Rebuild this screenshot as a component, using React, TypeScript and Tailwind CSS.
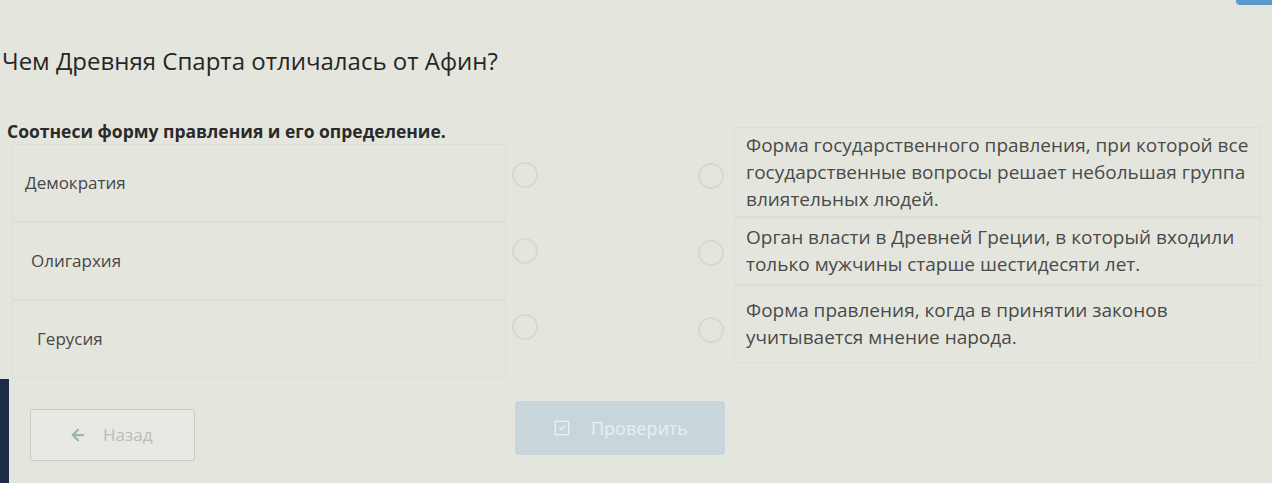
import { ArrowLeft, SquareCheck } from "lucide-react";

const terms = ["Демократия", "Олигархия", "Герусия"];

const definitions = [
    { h: 90, lines: ["Форма государственного правления, при которой все", "государственные вопросы решает небольшая группа", "влиятельных людей."] },
    { h: 68, lines: ["Орган власти в Древней Греции, в который входили", "только мужчины старше шестидесяти лет."] },
    { h: 78, lines: ["Форма правления, когда в принятии законов", "учитывается мнение народа."] },
];

function Dot() {
    return <div className="h-[26px] w-[26px] rounded-full border-2 border-[#d6d9cf]" />;
}

export default function App() {
    return (
        <div
            className="relative h-[483px] w-[1272px] overflow-hidden bg-[#e4e6de]"
            style={{ fontFamily: '"Open Sans", "Noto Sans", sans-serif' }}
        >
            {/* monitor edge + header button remnant */}
            <div className="absolute bottom-0 left-0 h-[104px] w-[9px] bg-[#1d2b45]" />
            <div className="absolute right-0 top-0 h-[5px] w-[36px] rounded-bl-sm bg-[#5b9bc9]" />

            <div className="pt-[43px]">
                <h1 className="pl-[2px] text-[24px] leading-[36px] text-[#262626]">
                    Чем Древняя Спарта отличалась от Афин?
                </h1>

                <div className="mt-[40px] pl-[7px] text-[17.5px] font-bold leading-[24px] text-[#2a2a2a]">
                    Соотнеси форму правления и его определение.
                </div>

                <div className="-mt-[22px] flex">
                    {/* terms */}
                    <div className="ml-[12px] mt-[23px] flex w-[494px] flex-col">
                        {terms.map((t, i) => (
                            <div
                                key={t}
                                className="flex h-[78px] items-center border border-[#dcdfd6] text-[17px] text-[#474747]"
                                style={{ paddingLeft: 12 + i * 6 }}
                            >
                                {t}
                            </div>
                        ))}
                    </div>

                    {/* connector dots */}
                    <div className="ml-[6px] mt-[41px] flex flex-col gap-[50px]">
                        <Dot />
                        <Dot />
                        <Dot />
                    </div>
                    <div className="ml-[160px] mt-[42px] flex flex-col gap-[51px]">
                        <Dot />
                        <Dot />
                        <Dot />
                    </div>

                    {/* definitions */}
                    <div className="ml-[10px] mt-[6px] flex w-[527px] flex-col">
                        {definitions.map((d, i) => (
                            <div
                                key={i}
                                className="flex flex-col justify-center border border-[#dcdfd6] px-[11px] text-[19px] leading-[27px] text-[#4a4a4a]"
                                style={{ height: d.h }}
                            >
                                {d.lines.map((l) => (
                                    <span key={l} className="whitespace-nowrap">
                                        {l}
                                    </span>
                                ))}
                            </div>
                        ))}
                    </div>
                </div>

                <div className="mt-[23px] flex items-start">
                    <button className="ml-[30px] mt-[8px] flex h-[52px] w-[165px] items-center gap-[16px] rounded-[3px] border border-[#c8cbc3] bg-[#e7e9e2] pl-[38px] text-[17px] text-[#b7bdbb]">
                        <ArrowLeft size={18} strokeWidth={3} className="text-[#9fb3b1]" />
                        Назад
                    </button>
                    <button className="ml-[320px] flex h-[54px] w-[210px] items-center gap-[20px] rounded-[3px] bg-[#c8d6db] pl-[38px] text-[18px] text-[#e9eff1]">
                        <SquareCheck size={18} className="text-[#e9eff1]" />
                        Проверить
                    </button>
                </div>
            </div>
        </div>
    );
}
